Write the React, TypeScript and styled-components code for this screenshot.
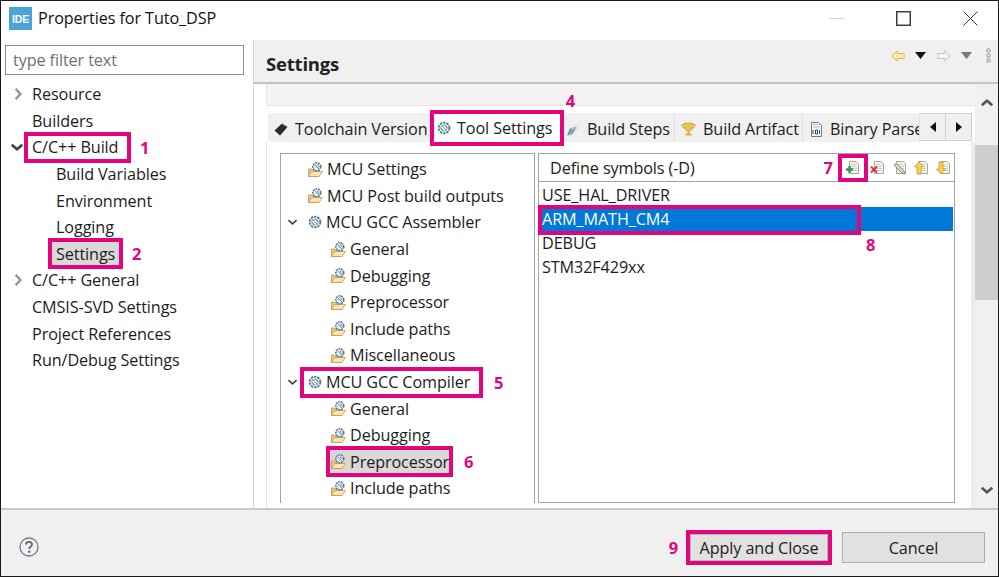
import React from "react";
import styled, { createGlobalStyle } from "styled-components";

const PINK = "#e2057d";

const GlobalStyle = createGlobalStyle`
  html, body {
    margin: 0;
    padding: 0;
    background: #fff;
  }
  body {
    font-family: "Open Sans", "Noto Sans", "Liberation Sans", sans-serif;
    font-size: 16.2px;
    letter-spacing: -0.1px;
    color: #1c1c1c;
    overflow: hidden;
  }
`;

const Window = styled.div`
  box-sizing: border-box;
  width: 999px;
  height: 577px;
  border: 1px solid #1a1a1a;
  display: flex;
  flex-direction: column;
  background: #fff;
`;

const TitleBar = styled.header`
  height: 39px;
  flex: none;
  box-sizing: border-box;
  display: flex;
  align-items: center;
  padding: 0 0 5px 8px;
`;

const TitleText = styled.span`
  margin-left: 6px;
  font-size: 16.2px;
  color: #111;
`;

const WindowButtons = styled.div`
  margin-left: auto;
  display: flex;
  align-items: center;
  padding-right: 20px;
  gap: 52px;
`;

const Main = styled.div`
  flex: 1;
  min-height: 0;
  display: flex;
`;

const LeftPane = styled.aside`
  width: 252px;
  flex: none;
  padding: 5px 9px 0 4px;
  box-sizing: border-box;
`;

const FilterInput = styled.input`
  box-sizing: border-box;
  width: 239px;
  height: 30px;
  border: 1px solid #8c8c8c;
  padding: 0 7px;
  font: inherit;
  letter-spacing: inherit;
  outline: none;
  margin-bottom: 6px;
  &::placeholder {
    color: #6f6f6f;
    opacity: 1;
  }
`;

const TreeRow = styled.div<{ $indent: number }>`
  height: 26.6px;
  display: flex;
  align-items: center;
  padding-left: ${(p) => p.$indent}px;
  white-space: nowrap;
  position: relative;
`;

const Twisty = styled.span<{ $left: number }>`
  position: absolute;
  left: ${(p) => p.$left}px;
  top: 50%;
  transform: translateY(-50%);
  display: flex;
`;

const Label = styled.span<{ $marked?: boolean; $selected?: boolean; $width?: number; $inset?: number }>`
  box-sizing: border-box;
  display: inline-flex;
  align-items: center;
  gap: 4px;
  height: 23px;
  width: ${(p) => (p.$width ? `${p.$width}px` : "auto")};
  padding: 0 0 0 ${(p) => p.$inset ?? 4}px;
  margin-left: -${(p) => p.$inset ?? 4}px;
  background: ${(p) => (p.$selected ? "#d9d9d9" : "transparent")};
  outline: ${(p) => (p.$marked ? `4px solid ${PINK}` : "none")};
`;

const Number = styled.span`
  color: ${PINK};
  font-weight: 700;
  font-size: 16.5px;
  margin-left: 13px;
  letter-spacing: 0;
`;

const SettingsNumber = styled(Number)`
  margin-left: 15px;
`;

const ToolNumber = styled(Number)`
  margin: 0 3px 0 0;
`;

const RightPane = styled.section`
  flex: 1;
  min-width: 0;
  display: flex;
  flex-direction: column;
  border-left: 1px solid #d4d4d4;
`;

const PageHeader = styled.div`
  height: 44px;
  flex: none;
  box-sizing: border-box;
  background: #f0f0f0;
  border-bottom: 2px solid #c4c4c4;
  display: flex;
  align-items: center;
  padding: 4px 7px 0 12px;
`;

const PageTitle = styled.h1`
  margin: 0;
  font-size: 18.5px;
  font-weight: 700;
  letter-spacing: -0.2px;
  color: #222;
`;

const HeaderTools = styled.div`
  margin-left: auto;
  display: flex;
  align-items: center;
  margin-top: -15px;
`;

const PageBody = styled.div`
  flex: 1;
  min-height: 0;
  display: flex;
`;

const Content = styled.div`
  flex: 1;
  min-width: 0;
  padding-left: 12px;
  display: flex;
  flex-direction: column;
`;

const TopStrip = styled.div`
  height: 21px;
  flex: none;
  background: #f3f3f3;
  border-bottom: 1px solid #e4e4e4;
  border-left: 1px solid #e4e4e4;
`;

const TabRow = styled.div`
  height: 36px;
  flex: none;
  display: flex;
  align-items: flex-end;
  padding-left: 2px;
`;

const Tab = styled.div<{ $width: number; $pad: number; $active?: boolean }>`
  box-sizing: border-box;
  width: ${(p) => p.$width}px;
  flex: none;
  height: ${(p) => (p.$active ? 28 : 29)}px;
  margin: ${(p) => (p.$active ? "0 4px" : "0")};
  display: flex;
  align-items: center;
  gap: ${(p) => (p.$active ? 6 : 7)}px;
  padding: ${(p) => (p.$active ? 0 : 3)}px 0 0 ${(p) => p.$pad}px;
  background: ${(p) => (p.$active ? "#fff" : "#f0f0f0")};
  border-right: ${(p) => (p.$active ? "none" : "1px solid #e2e2e2")};
  outline: ${(p) => (p.$active ? `4px solid ${PINK}` : "none")};
  overflow: ${(p) => (p.$active ? "visible" : "hidden")};
  white-space: nowrap;
  position: relative;

  svg {
    flex: none;
  }
`;

const TabBadge = styled.span`
  position: absolute;
  right: -15px;
  top: -25px;
  color: ${PINK};
  font-weight: 700;
  font-size: 16.5px;
`;

const TabArrows = styled.div`
  display: flex;
  height: 28px;
  margin-bottom: 1px;
`;

const TabArrow = styled.button`
  width: 27px;
  padding: 0;
  border: 1px solid #d0d0d0;
  margin-left: -1px;
  background: #f0f0f0;
  display: flex;
  align-items: center;
  justify-content: center;
`;

const TabPanel = styled.div`
  flex: 1;
  min-height: 0;
  display: flex;
  gap: 3px;
  padding: 11px 16px 5px 13px;
  border-left: 1px solid #e4e4e4;
  border-right: 4px solid #ececec;
`;

const SettingsTree = styled.div`
  width: 255px;
  flex: none;
  box-sizing: border-box;
  border: 1px solid #a3a3a3;
  border-bottom: none;
  overflow: hidden;
  padding-top: 2px;
`;

const SymbolsPane = styled.div`
  flex: 1;
  min-width: 0;
  border: 1px solid #a3a3a3;
  display: flex;
  flex-direction: column;
`;

const SymbolsHeader = styled.div`
  height: 27px;
  flex: none;
  border-bottom: 1px solid #a3a3a3;
  display: flex;
  align-items: center;
  padding-left: 11px;
`;

const SymbolsTools = styled.div`
  margin-left: auto;
  display: flex;
  align-items: center;
  gap: 6px;
  padding-right: 2px;
`;

const ToolMark = styled.span<{ $marked?: boolean }>`
  display: flex;
  padding: ${(p) => (p.$marked ? "2px 3px" : "0")};
  outline: ${(p) => (p.$marked ? `4px solid ${PINK}` : "none")};
`;

const SymbolList = styled.ul`
  list-style: none;
  margin: 0;
  padding: 1px 1px 0 0;
`;

const SymbolRow = styled.li<{ $selected?: boolean }>`
  height: 24px;
  display: flex;
  align-items: center;
  padding-left: 3px;
  color: ${(p) => (p.$selected ? "#fff" : "#1c1c1c")};
  background: ${(p) => (p.$selected ? "#0078d7" : "transparent")};
  position: relative;
`;

const SelectionMark = styled.span`
  position: absolute;
  left: -1px;
  top: -2px;
  width: 323px;
  height: 30px;
  box-sizing: border-box;
  border: 4px solid ${PINK};
`;

const RowBadge = styled.span`
  position: absolute;
  left: 327px;
  top: 26px;
  color: ${PINK};
  font-weight: 700;
  font-size: 16.5px;
`;

const ScrollBar = styled.div`
  width: 23px;
  flex: none;
  display: flex;
  flex-direction: column;
  margin-left: auto;
  background: #f0f0f0;
`;

const ScrollButton = styled.div<{ $end?: boolean }>`
  height: ${(p) => (p.$end ? 36 : 38)}px;
  flex: none;
  display: flex;
  align-items: center;
  justify-content: center;
  margin-top: ${(p) => (p.$end ? "auto" : "0")};
`;

const ScrollThumb = styled.div`
  height: 155px;
  margin-top: 23px;
  background: #cdcdcd;
`;

const ButtonBar = styled.footer`
  flex: none;
  height: 68px;
  box-sizing: border-box;
  background: #f0f0f0;
  border-top: 2px solid #c8c8c8;
  display: flex;
  align-items: center;
  padding: 8px 13px 0 18px;
`;

const FooterNumber = styled.span`
  margin-left: auto;
  margin-right: 12px;
  color: ${PINK};
  font-weight: 700;
  font-size: 16.5px;
`;

const DialogButton = styled.button<{ $marked?: boolean }>`
  box-sizing: border-box;
  width: ${(p) => (p.$marked ? 138 : 143)}px;
  height: ${(p) => (p.$marked ? 27 : 31)}px;
  margin-left: ${(p) => (p.$marked ? 0 : 14)}px;
  border: 1px solid ${(p) => (p.$marked ? "#b5b5b5" : "#adadad")};
  background: #e1e1e1;
  font: inherit;
  letter-spacing: inherit;
  color: #1c1c1c;
  padding: 2px 0 0;
  outline: ${(p) => (p.$marked ? `4px solid ${PINK}` : "none")};
`;

const ToolSlot = styled.span<{ $gap: number }>`
  display: flex;
  margin-left: ${(p) => p.$gap}px;
`;

const FlippedArrow = styled.span`
  display: flex;
  transform: scaleX(-1);
`;

const Chevron = ({ dir, size = 12, color = "#6a6a6a", width = 2 }: { dir: "up" | "down" | "right"; size?: number; color?: string; width?: number }) => {
  const d = dir === "up" ? "M1.5 8 L6 4 L10.5 8" : dir === "down" ? "M1.5 4 L6 8 L10.5 4" : "M4 1.5 L8 6 L4 10.5";
  return (
    <svg width={size} height={size} viewBox="0 0 12 12" fill="none">
      <path d={d} stroke={color} strokeWidth={width} />
    </svg>
  );
};

const IdeLogo = () => (
  <svg width="23" height="23" viewBox="0 0 23 23">
    <rect width="23" height="23" fill="#4ba3d9" />
    <text x="11.5" y="15.5" fontFamily="Liberation Sans, sans-serif" fontSize="10.5" fontWeight="700" fill="#fff" textAnchor="middle">
      IDE
    </text>
  </svg>
);

const Minimize = () => (
  <svg width="15" height="15" viewBox="0 0 15 15">
    <path d="M0 7.5 H15" stroke="#d4d4d4" strokeWidth="1" />
  </svg>
);

const Maximize = () => (
  <svg width="15" height="15" viewBox="0 0 15 15" fill="none">
    <rect x="0.75" y="0.75" width="13.5" height="13.5" stroke="#333" strokeWidth="1.4" />
  </svg>
);

const CloseX = () => (
  <svg width="15" height="15" viewBox="0 0 15 15" fill="none">
    <path d="M0.5 0.5 L14.5 14.5 M14.5 0.5 L0.5 14.5" stroke="#333" strokeWidth="1" />
  </svg>
);

const NavArrow = ({ fill, stroke }: { fill: string; stroke: string }) => (
  <svg width="14" height="12" viewBox="0 0 14 12">
    <path d="M0.8 6 L6.5 0.8 V3.5 H13.2 V8.5 H6.5 V11.2 Z" fill={fill} stroke={stroke} strokeWidth="1" />
  </svg>
);

const DropTriangle = ({ color }: { color: string }) => (
  <svg width="11" height="7" viewBox="0 0 11 7">
    <path d="M0 0 H11 L5.5 7 Z" fill={color} />
  </svg>
);

const ThreeDots = () => (
  <svg width="5" height="15" viewBox="0 0 5 15" fill="none" stroke="#8a8a8a">
    <circle cx="2.5" cy="2.5" r="1.7" />
    <circle cx="2.5" cy="7.5" r="1.7" />
    <circle cx="2.5" cy="12.5" r="1.7" />
  </svg>
);

const Gear = () => (
  <svg width="14" height="14" viewBox="0 0 14 14" fill="none" style={{ flex: "none" }}>
    <circle cx="7" cy="7" r="5.4" fill="#e6eef2" stroke="#55798d" strokeWidth="1.8" strokeDasharray="2.4 1" />
    <circle cx="7" cy="7" r="3.2" fill="#fff" stroke="#7fa0b1" strokeWidth="0.8" />
    <path d="M4.8 4.6 L9.5 9.4 M7.4 4.2 L10 6.8 M4 7.2 L6.6 9.8" stroke="#4d7287" strokeWidth="0.9" />
  </svg>
);

const GearFolder = () => (
  <svg width="15" height="15" viewBox="0 0 15 15" fill="none" style={{ flex: "none" }}>
    <path d="M0.5 7 H4 L5 8 H11 V14.5 H0.5 Z" fill="#e9c88a" stroke="#c6964a" strokeWidth="0.8" />
    <path d="M0.5 14.5 L3.5 9.5 H14.5 L11 14.5 Z" fill="#f8e6b8" stroke="#c6964a" strokeWidth="0.8" />
    <circle cx="8.8" cy="4.8" r="4" fill="#e6eef2" stroke="#55798d" strokeWidth="1.5" strokeDasharray="2 0.8" />
    <path d="M6.8 3 L11 7 M9 2.6 L11.6 5" stroke="#4d7287" strokeWidth="0.9" />
  </svg>
);

const Diamond = () => (
  <svg width="14" height="13" viewBox="0 0 14 13">
    <path d="M0.5 7.5 L8 0.5 L13.5 4 L6 12.5 Z" fill="#2a2a2a" />
    <path d="M8 1 L13 4" stroke="#777" strokeWidth="1" />
  </svg>
);

const BuildStepsIcon = () => (
  <svg width="14" height="15" viewBox="0 0 14 15" fill="none">
    <path d="M0.8 14 L3.2 6.8 L9 4.5 L13.5 1.2 L11 6 L7.8 11 Z" fill="#a9bdca" />
    <path d="M2.2 13 L5 7 M4.6 13 L7.4 7.4" stroke="#5f7f93" strokeWidth="1.1" />
    <path d="M9 4.5 L13.5 1.2 L11 6 Z" fill="#e6edf1" />
  </svg>
);

const Trophy = () => (
  <svg width="15" height="15" viewBox="0 0 15 15" fill="none">
    <path d="M3.5 1 H11.5 V5 C11.5 8 9.5 9 7.5 9 C5.5 9 3.5 8 3.5 5 Z" fill="#efc14e" stroke="#d49a22" strokeWidth="0.7" />
    <path d="M3.5 2.5 H1 V4.5 L3.5 6.5 M11.5 2.5 H14 V4.5 L11.5 6.5" stroke="#d49a22" strokeWidth="1" />
    <path d="M6.5 9 H8.5 V11.5 H6.5 Z M4.5 11.5 H10.5 V13.5 H4.5 Z" fill="#e0ac35" />
  </svg>
);

const BinaryFile = () => (
  <svg width="13" height="15" viewBox="0 0 13 15" fill="none">
    <path d="M1.5 0.5 H8.5 L11.5 3.5 V14.5 H1.5 Z" fill="#f6f8fa" stroke="#6f7e8a" strokeWidth="1" />
    <path d="M3 2.5 H8 M3 5 H10" stroke="#a0adb8" strokeWidth="0.8" />
    <path d="M3 8 V12 M5.5 8 H7.5 V12 H5.5 Z M9.5 8 V12" stroke="#2f4a60" strokeWidth="1" />
  </svg>
);

const HelpIcon = () => (
  <svg width="20" height="20" viewBox="0 0 20 20" fill="none">
    <circle cx="10" cy="10" r="9" stroke="#6f7b88" strokeWidth="1.3" />
    <path d="M7 7.6 C7 5.8 8.4 4.9 10 4.9 C11.7 4.9 13 5.9 13 7.5 C13 9.6 10.2 9.7 10.2 12" stroke="#5f6b78" strokeWidth="1.9" />
    <circle cx="10.2" cy="14.8" r="1.2" fill="#5f6b78" />
  </svg>
);

const DocBase = ({ children }: { children?: React.ReactNode }) => (
  <svg width="16" height="16" viewBox="0 0 16 16" fill="none">
    <path d="M4.5 1.5 H11 L13.5 4 V13.5 H4.5 Z" fill="#f3f4ef" stroke="#a5a899" strokeWidth="1" />
    <path d="M6 4.5 H11 M6 6.5 H12 M6 8.5 H12 M6 10.5 H12" stroke="#c3c6bb" strokeWidth="0.8" />
    {children}
  </svg>
);

const AddSymbol = () => (
  <DocBase>
    <path d="M1 9.5 H8 M4.5 6 V13" stroke="#2d9a4c" strokeWidth="2.4" />
  </DocBase>
);
const DeleteSymbol = () => (
  <DocBase>
    <path d="M1 6.5 L7 12.5 M7 6.5 L1 12.5" stroke="#e0342f" strokeWidth="2" />
  </DocBase>
);
const EditSymbol = () => (
  <DocBase>
    <path d="M4 3 L12 11 L13 14 L10 13 L2 5 Z" fill="#dcdcc4" stroke="#77776a" strokeWidth="0.8" />
  </DocBase>
);
const MoveUp = () => (
  <DocBase>
    <path d="M5 2 L9.5 7 H7 V14 H3 V7 H0.5 Z" fill="#f6d24a" stroke="#c69a20" strokeWidth="0.8" />
  </DocBase>
);
const MoveDown = () => (
  <DocBase>
    <path d="M5 14 L9.5 9 H7 V2 H3 V9 H0.5 Z" fill="#f6d24a" stroke="#c69a20" strokeWidth="0.8" />
  </DocBase>
);

const leftTree: { label: string; indent: number; twisty?: "right" | "down"; marked?: boolean; selected?: boolean; num?: string; width?: number }[] = [
  { label: "Resource", indent: 27, twisty: "right" },
  { label: "Builders", indent: 27 },
  { label: "C/C++ Build", indent: 27, twisty: "down", marked: true, num: "1", width: 99 },
  { label: "Build Variables", indent: 51 },
  { label: "Environment", indent: 51 },
  { label: "Logging", indent: 51 },
  { label: "Settings", indent: 51, marked: true, selected: true, num: "2", width: 67 },
  { label: "C/C++ General", indent: 27, twisty: "right" },
  { label: "CMSIS-SVD Settings", indent: 27 },
  { label: "Project References", indent: 27 },
  { label: "Run/Debug Settings", indent: 27 },
];

const settingsTree: { label: string; level: number; open?: boolean; marked?: boolean; selected?: boolean; num?: string; width?: number }[] = [
  { label: "MCU Settings", level: 0 },
  { label: "MCU Post build outputs", level: 0 },
  { label: "MCU GCC Assembler", level: 0, open: true },
  { label: "General", level: 1 },
  { label: "Debugging", level: 1 },
  { label: "Preprocessor", level: 1 },
  { label: "Include paths", level: 1 },
  { label: "Miscellaneous", level: 1 },
  { label: "MCU GCC Compiler", level: 0, open: true, marked: true, num: "5", width: 175 },
  { label: "General", level: 1 },
  { label: "Debugging", level: 1 },
  { label: "Preprocessor", level: 1, marked: true, selected: true, num: "6", width: 119 },
  { label: "Include paths", level: 1 },
];

export default function App() {
  return (
    <>
      <GlobalStyle />
      <Window>
        <TitleBar>
          <IdeLogo />
          <TitleText>Properties for Tuto_DSP</TitleText>
          <WindowButtons>
            <Minimize />
            <Maximize />
            <CloseX />
          </WindowButtons>
        </TitleBar>
        <Main>
          <LeftPane>
            <FilterInput placeholder="type filter text" readOnly />
            {leftTree.map((row) => (
              <TreeRow key={row.label} $indent={row.indent}>
                {row.twisty && (
                  <Twisty $left={row.twisty === "down" ? 5 : 6}>
                    <Chevron dir={row.twisty} size={14} color={row.twisty === "down" ? "#444" : "#999"} width={2.2} />
                  </Twisty>
                )}
                <Label $marked={row.marked} $selected={row.selected} $width={row.width}>
                  {row.label}
                </Label>
                {row.num && <Number>{row.num}</Number>}
              </TreeRow>
            ))}
          </LeftPane>
          <RightPane>
            <PageHeader>
              <PageTitle>Settings</PageTitle>
              <HeaderTools>
                <NavArrow fill="#fbeeb0" stroke="#d9b84a" />
                <ToolSlot $gap={10}>
                  <DropTriangle color="#111" />
                </ToolSlot>
                <ToolSlot $gap={11}>
                  <FlippedArrow>
                    <NavArrow fill="#f4f4f4" stroke="#c4c4c4" />
                  </FlippedArrow>
                </ToolSlot>
                <ToolSlot $gap={10}>
                  <DropTriangle color="#7a7a7a" />
                </ToolSlot>
                <ToolSlot $gap={14}>
                  <ThreeDots />
                </ToolSlot>
              </HeaderTools>
            </PageHeader>
            <PageBody>
              <Content>
                <TopStrip />
                <TabRow>
                  <Tab $width={162} $pad={6}>
                    <Diamond />
                    Toolchain Version
                  </Tab>
                  <Tab $width={126} $pad={3} $active>
                    <Gear />
                    Tool Settings
                    <TabBadge>4</TabBadge>
                  </Tab>
                  <Tab $width={111} $pad={2}>
                    <BuildStepsIcon />
                    Build Steps
                  </Tab>
                  <Tab $width={128} $pad={6}>
                    <Trophy />
                    Build Artifact
                  </Tab>
                  <Tab $width={117} $pad={7}>
                    <BinaryFile />
                    Binary Parser
                  </Tab>
                  <TabArrows>
                    <TabArrow aria-label="previous">
                      <svg width="6" height="10" viewBox="0 0 6 10">
                        <path d="M6 0 V10 L0 5 Z" fill="#111" />
                      </svg>
                    </TabArrow>
                    <TabArrow aria-label="next">
                      <svg width="6" height="10" viewBox="0 0 6 10">
                        <path d="M0 0 V10 L6 5 Z" fill="#111" />
                      </svg>
                    </TabArrow>
                  </TabArrows>
                </TabRow>
                <TabPanel>
                  <SettingsTree>
                    {settingsTree.map((row, i) => (
                      <TreeRow key={i} $indent={row.level === 0 ? 27 : 50}>
                        {row.open && (
                          <Twisty $left={6}>
                            <Chevron dir="down" size={11} color="#444" width={1.8} />
                          </Twisty>
                        )}
                        <Label $marked={row.marked} $selected={row.selected} $width={row.width} $inset={row.level === 0 ? 4 : 1}>
                          {row.level === 0 && row.open ? <Gear /> : <GearFolder />}
                          {row.label}
                        </Label>
                        {row.num && <SettingsNumber>{row.num}</SettingsNumber>}
                      </TreeRow>
                    ))}
                  </SettingsTree>
                  <SymbolsPane>
                    <SymbolsHeader>
                      Define symbols (-D)
                      <SymbolsTools>
                        <ToolNumber>7</ToolNumber>
                        <ToolMark $marked>
                          <AddSymbol />
                        </ToolMark>
                        <DeleteSymbol />
                        <EditSymbol />
                        <MoveUp />
                        <MoveDown />
                      </SymbolsTools>
                    </SymbolsHeader>
                    <SymbolList>
                      <SymbolRow>USE_HAL_DRIVER</SymbolRow>
                      <SymbolRow $selected>
                        ARM_MATH_CM4
                        <SelectionMark />
                        <RowBadge>8</RowBadge>
                      </SymbolRow>
                      <SymbolRow>DEBUG</SymbolRow>
                      <SymbolRow>STM32F429xx</SymbolRow>
                    </SymbolList>
                  </SymbolsPane>
                </TabPanel>
              </Content>
              <ScrollBar>
                <ScrollButton>
                  <Chevron dir="up" size={14} color="#555" width={2.2} />
                </ScrollButton>
                <ScrollThumb />
                <ScrollButton $end>
                  <Chevron dir="down" size={14} color="#555" width={2.2} />
                </ScrollButton>
              </ScrollBar>
            </PageBody>
          </RightPane>
        </Main>
        <ButtonBar>
          <HelpIcon />
          <FooterNumber>9</FooterNumber>
          <DialogButton $marked>Apply and Close</DialogButton>
          <DialogButton>Cancel</DialogButton>
        </ButtonBar>
      </Window>
    </>
  );
}
